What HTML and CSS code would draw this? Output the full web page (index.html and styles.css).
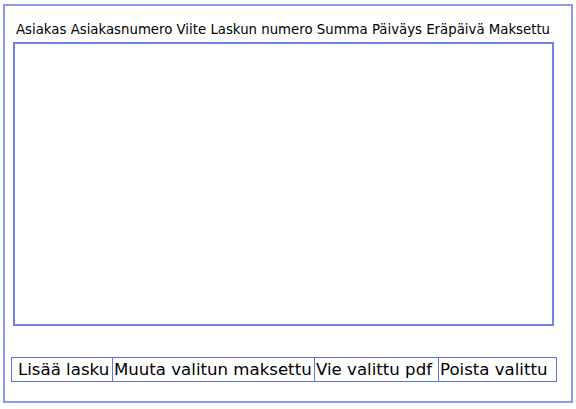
FILE: index.html
```html
<!DOCTYPE html>
<html>
<head>
<meta charset="utf-8">
<link rel="stylesheet" href="styles.css">
</head>
<body>
<div class="frame">
  <div class="header">Asiakas Asiakasnumero Viite Laskun numero Summa Päiväys Eräpäivä Maksettu</div>
  <div class="list"></div>
  <div class="buttons">
    <div class="btn b1">Lisää lasku</div>
    <div class="btn b2">Muuta valitun maksettu</div>
    <div class="btn b3">Vie valittu pdf</div>
    <div class="btn b4">Poista valittu</div>
  </div>
</div>
</body>
</html>
```
FILE: styles.css
```css
html, body {
  margin: 0;
  padding: 0;
  background: #ffffff;
}
body {
  font-family: "DejaVu Sans", "Liberation Sans", sans-serif;
  color: #000;
}
.frame {
  box-sizing: border-box;
  margin: 4px 0 0 3px;
  width: 570px;
  height: 399px;
  border: 2px solid #8c9bf0;
  padding: 0 0 0 8px;
  display: flex;
  flex-direction: column;
}
.header {
  font-size: 13.3px;
  line-height: 16px;
  margin-top: 16px;
  margin-left: 3px;
  white-space: nowrap;
}
.list {
  box-sizing: border-box;
  margin-top: 4px;
  margin-left: 0;
  width: 541px;
  height: 284px;
  border: 2px solid #6f82e6;
}
.buttons {
  display: flex;
  margin-top: 31px;
  margin-left: -2px;
  height: 25px;
}
.btn {
  box-sizing: border-box;
  height: 25px;
  border: 1px solid #5f73e4;
  border-left: none;
  font-size: 16.6px;
  line-height: 23px;
  white-space: nowrap;
  padding-left: 1px;
  overflow: hidden;
}
.b1 { width: 102px; border-left: 1px solid #5f73e4; padding-left: 6px; }
.b2 { width: 202px; }
.b3 { width: 124px; }
.b4 { width: 118px; }
```
